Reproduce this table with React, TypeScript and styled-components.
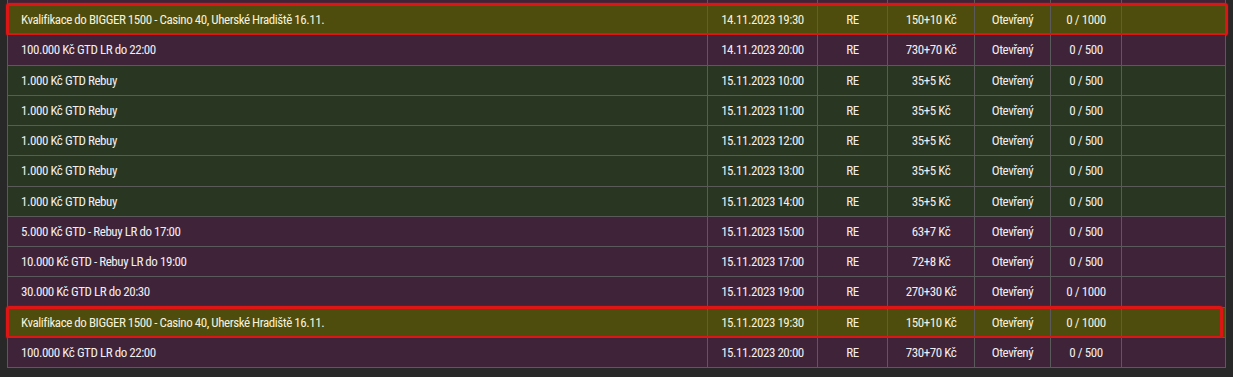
import styled, { createGlobalStyle } from "styled-components";

const GlobalStyle = createGlobalStyle`
  html, body {
    margin: 0;
    padding: 0;
    background: #282828;
  }
  body {
    font-family: "Roboto Condensed", "Liberation Sans Narrow", "Arial Narrow", Roboto, sans-serif;
  }
`;

type Tone = "purple" | "green" | "gold";

const toneColors: Record<Tone, string> = {
  purple: "#3e2339",
  green: "#283622",
  gold: "#4e4d0d",
};

const Viewport = styled.div`
  height: 377px;
  overflow: hidden;
  padding: 0 8px 0 7px;
`;

const Table = styled.div`
  margin-top: -25.25px;
  border-left: 1px solid #5a5a5a;
  border-right: 1px solid #5a5a5a;
  width: 1217px;
`;

const Row = styled.div<{ $tone: Tone }>`
  position: relative;
  display: grid;
  grid-template-columns: 699px 110px 70px 87px 76px 71px 104px;
  height: 29.25px;
  border-bottom: 1px solid #5a5a5a;
  background: ${(p) => toneColors[p.$tone]};
  color: ${(p) => (p.$tone === "gold" ? "#f6f1dc" : "#f2eef0")};
  font-size: 13px;
  letter-spacing: -0.45px;
`;

const Cell = styled.div<{ $left?: boolean }>`
  display: flex;
  align-items: center;
  justify-content: ${(p) => (p.$left ? "flex-start" : "center")};
  padding-left: ${(p) => (p.$left ? "13px" : "0")};
  border-left: ${(p) => (p.$left ? "none" : "1px solid #5a5a5a")};
  white-space: nowrap;
  overflow: hidden;
`;

const Highlight = styled.div<{ $right: number }>`
  position: absolute;
  top: -2px;
  bottom: -2px;
  left: -2px;
  right: ${(p) => p.$right}px;
  border: 3px solid #dc1515;
  border-radius: 3px;
  box-shadow: 0 0 2px rgba(220, 21, 21, 0.7);
  pointer-events: none;
`;

interface ITournament {
  name: string;
  date: string;
  type: string;
  buyIn: string;
  status: string;
  players: string;
  tone: Tone;
  frame?: number;
}

const qualifier = "Kvalifikace do BIGGER 1500 - Casino 40, Uherské Hradiště 16.11.";

// first entry is the row scrolled mostly out of view; only its bottom edge shows
const rows: ITournament[] = [
  { name: "", date: "", type: "", buyIn: "", status: "", players: "", tone: "purple" },
  { name: qualifier, date: "14.11.2023 19:30", type: "RE", buyIn: "150+10 Kč", status: "Otevřený", players: "0 / 1000", tone: "gold", frame: -3 },
  { name: "100.000 Kč GTD LR do 22:00", date: "14.11.2023 20:00", type: "RE", buyIn: "730+70 Kč", status: "Otevřený", players: "0 / 500", tone: "purple" },
  { name: "1.000 Kč GTD Rebuy", date: "15.11.2023 10:00", type: "RE", buyIn: "35+5 Kč", status: "Otevřený", players: "0 / 500", tone: "green" },
  { name: "1.000 Kč GTD Rebuy", date: "15.11.2023 11:00", type: "RE", buyIn: "35+5 Kč", status: "Otevřený", players: "0 / 500", tone: "green" },
  { name: "1.000 Kč GTD Rebuy", date: "15.11.2023 12:00", type: "RE", buyIn: "35+5 Kč", status: "Otevřený", players: "0 / 500", tone: "green" },
  { name: "1.000 Kč GTD Rebuy", date: "15.11.2023 13:00", type: "RE", buyIn: "35+5 Kč", status: "Otevřený", players: "0 / 500", tone: "green" },
  { name: "1.000 Kč GTD Rebuy", date: "15.11.2023 14:00", type: "RE", buyIn: "35+5 Kč", status: "Otevřený", players: "0 / 500", tone: "green" },
  { name: "5.000 Kč GTD - Rebuy LR do 17:00", date: "15.11.2023 15:00", type: "RE", buyIn: "63+7 Kč", status: "Otevřený", players: "0 / 500", tone: "purple" },
  { name: "10.000 Kč GTD - Rebuy LR do 19:00", date: "15.11.2023 17:00", type: "RE", buyIn: "72+8 Kč", status: "Otevřený", players: "0 / 500", tone: "purple" },
  { name: "30.000 Kč GTD LR do 20:30", date: "15.11.2023 19:00", type: "RE", buyIn: "270+30 Kč", status: "Otevřený", players: "0 / 1000", tone: "purple" },
  { name: qualifier, date: "15.11.2023 19:30", type: "RE", buyIn: "150+10 Kč", status: "Otevřený", players: "0 / 1000", tone: "gold", frame: 2 },
  { name: "100.000 Kč GTD LR do 22:00", date: "15.11.2023 20:00", type: "RE", buyIn: "730+70 Kč", status: "Otevřený", players: "0 / 500", tone: "purple" },
];

const App = () => {
  return (
    <>
      <GlobalStyle />
      <Viewport>
        <Table>
          {rows.map((r, i) => (
            <Row key={i} $tone={r.tone}>
              <Cell $left>{r.name}</Cell>
              <Cell>{r.date}</Cell>
              <Cell>{r.type}</Cell>
              <Cell>{r.buyIn}</Cell>
              <Cell>{r.status}</Cell>
              <Cell>{r.players}</Cell>
              <Cell />
              {r.frame !== undefined && <Highlight $right={r.frame} />}
            </Row>
          ))}
        </Table>
      </Viewport>
    </>
  );
};

export default App;
